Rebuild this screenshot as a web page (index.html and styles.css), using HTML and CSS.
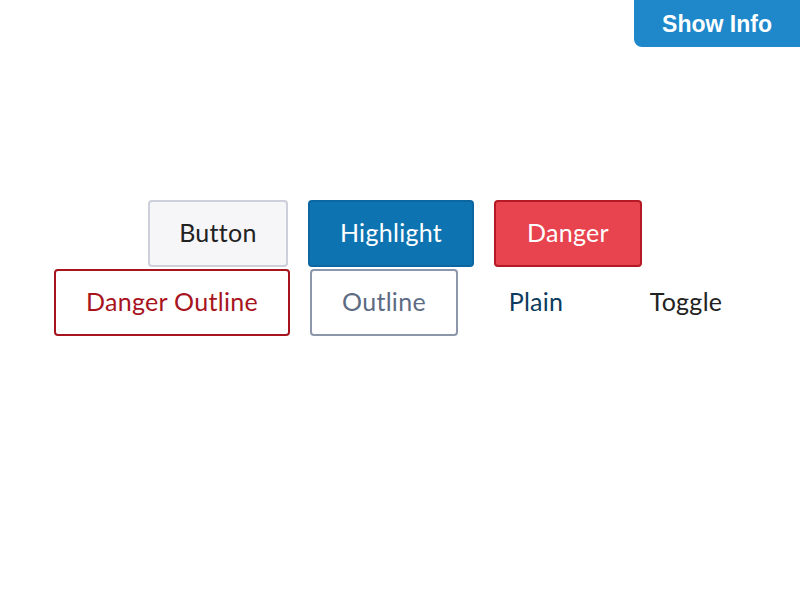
FILE: index.html
```html
<!DOCTYPE html>
<html>
<head>
<meta charset="utf-8">
<link rel="stylesheet" href="styles.css">
</head>
<body>
<button class="info">Show Info</button>
<div class="stage">
  <div class="row row-first">
    <button class="btn btn-default w-button">Button</button>
    <button class="btn btn-highlight w-highlight">Highlight</button>
    <button class="btn btn-danger w-danger">Danger</button>
  </div>
  <div class="row row-second">
    <button class="btn btn-danger-outline w-danger-outline">Danger Outline</button>
    <button class="btn btn-outline w-outline">Outline</button>
    <button class="btn btn-plain w-plain">Plain</button>
    <button class="btn btn-toggle w-toggle">Toggle</button>
  </div>
</div>
</body>
</html>
```
FILE: styles.css
```css
html, body {
  margin: 0;
  padding: 0;
  background: #ffffff;
  font-family: "Lato", "Liberation Sans", sans-serif;
}
.info {
  position: absolute;
  top: 0;
  right: 0;
  width: 166px;
  height: 47px;
  border: none;
  border-radius: 0 0 0 8px;
  background: #1e88cb;
  color: #ffffff;
  font-family: "Liberation Sans", sans-serif;
  font-weight: bold;
  font-size: 23px;
  padding: 1px 0 0 0;
}
.stage {
  padding-top: 200px;
  display: flex;
  flex-direction: column;
  align-items: center;
  gap: 2px;
}
.row {
  display: flex;
  justify-content: center;
  gap: 20px;
}
.row-first {
  margin-left: 0;
  margin-right: 10px;
}
.row-second {
  margin-left: 12px;
  margin-right: 0;
}
.btn {
  height: 67px;
  padding: 0 0 3px 0;
  border: 2px solid transparent;
  border-radius: 4px;
  font-family: "Lato", "Liberation Sans", sans-serif;
  font-size: 25px;
  letter-spacing: 0.3px;
  background: transparent;
  color: #222222;
}
.w-button { width: 140px; }
.w-highlight { width: 166px; }
.w-danger { width: 148px; }
.w-danger-outline { width: 236px; }
.w-outline { width: 148px; }
.w-plain { width: 116px; }
.w-toggle { width: 144px; }
.btn-default {
  background: #f6f6f8;
  border-color: #cdd0da;
  color: #222222;
}
.btn-highlight {
  background: #0e73b1;
  border-color: #0c67a0;
  color: #ffffff;
}
.btn-danger {
  background: #e8444f;
  border-color: #b41a25;
  color: #ffffff;
}
.btn-danger-outline {
  background: #ffffff;
  border-color: #a8141d;
  color: #a8141d;
}
.btn-outline {
  background: #ffffff;
  border-color: #8c97ab;
  color: #5d6b83;
}
.btn-plain {
  color: #0b3b5e;
}
.btn-toggle {
  color: #222222;
}
```
